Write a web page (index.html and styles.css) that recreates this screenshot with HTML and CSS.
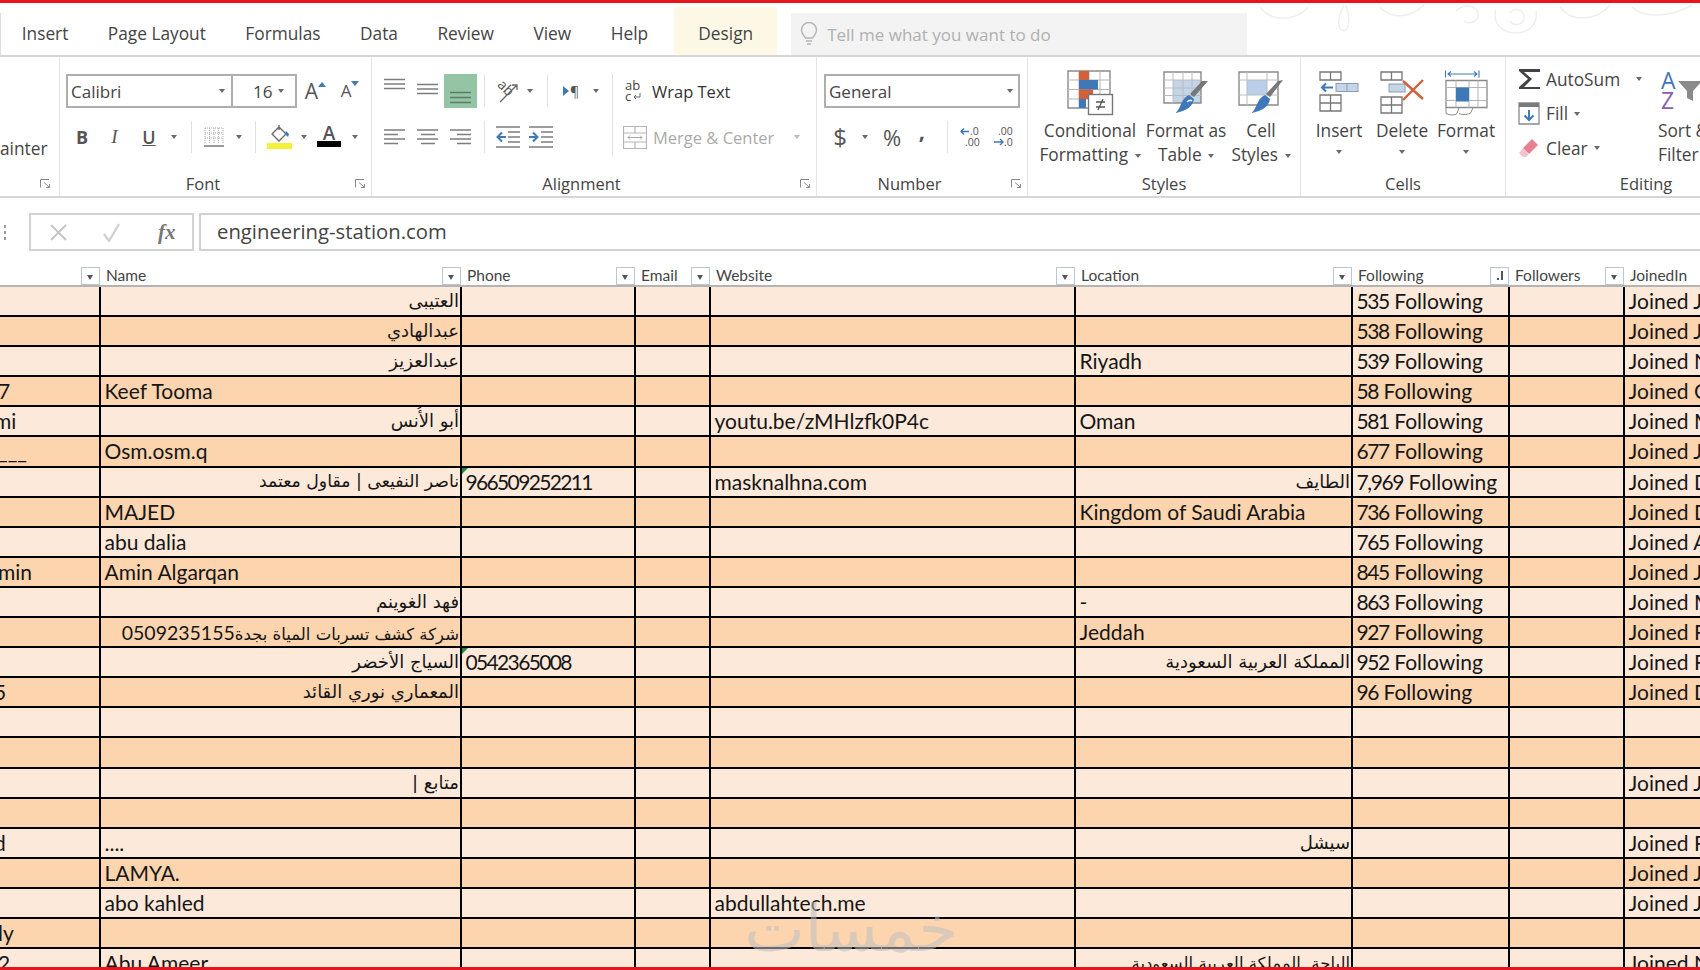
FILE: index.html
```html
<!DOCTYPE html>
<html lang="en">
<head>
<meta charset="utf-8">
<title>Excel sheet</title>
<link rel="stylesheet" href="styles.css">
</head>
<body>
<div class="frame">
  <nav class="tabs">
    <svg class="swirls" width="440" height="40" viewBox="0 0 440 40"><path d="M0 4c10 14 34 16 48 0M84 2c-6 12-8 24 0 26 6-2 6-14 2-26M120 4c10 12 30 12 44-2M196 8c8-8 20-6 22 2s-8 12-14 8M236 6c-4 14 6 24 20 24s22-10 20-22M250 10c4-6 14-4 14 4s-10 10-14 4M300 4c12 16 36 14 50-2M372 4c10 10 36 12 60-2"/></svg>
    <span class="tab">Insert</span>
    <span class="tab">Page Layout</span>
    <span class="tab">Formulas</span>
    <span class="tab">Data</span>
    <span class="tab">Review</span>
    <span class="tab">View</span>
    <span class="tab">Help</span>
    <span class="tab design">Design</span>
    <div class="tell">
      <svg width="18" height="24" viewBox="0 0 18 24"><path d="M5.500 16C3 13 1.500 11 1.500 8a7.500 7.500 0 0 1 15 0c0 3-1.500 5-4 8zM6 19h6M7 22h4" fill="none" stroke="#b5b5b5" stroke-width="1.400"/></svg>
      <span>Tell me what you want to do</span>
    </div>
  </nav>

  <section class="ribbon">
    <div class="group clip">
      <div class="clip-text">ainter</div>
      <div class="glabel"><span class="gname"></span><span class="launch"><svg width="11" height="9" viewBox="0 0 11 9"><path d="M.5 8.500V.5H9M4 3.500l5.500 5M9.500 5v3.500H6" fill="none" stroke="#888"/></svg></span></div>
    </div>

    <div class="group font">
      <div class="f-row1">
        <div class="combo name-combo"><span>Calibri</span><i class="car"></i></div>
        <div class="combo size-combo"><span>16</span><i class="car"></i></div>
        <div class="ibtn"><span class="big-a">A</span><svg width="8" height="5" class="tip" viewBox="0 0 8 5"><path d="M0 5L4 0l4 5z" fill="#4a78a8"/></svg></div>
        <div class="ibtn"><span class="small-a">A</span><svg width="8" height="5" class="tip" viewBox="0 0 8 5"><path d="M0 0l4 5 4-5z" fill="#4a78a8"/></svg></div>
      </div>
      <div class="f-row2">
        <b class="fb">B</b>
        <i class="fi">I</i>
        <u class="fu">U</u>
        <i class="car"></i>
        <i class="vsep"></i>
        <svg width="20" height="20" viewBox="0 0 20 20"><path d="M1 1h18M1 6h18M1 11h18M1 1v15M5.500 1v15M10 1v15M14.500 1v15M19 1v15" stroke="#aaa" stroke-dasharray="1 1" fill="none"/><path d="M0 19h20" stroke="#777" stroke-width="1.500"/></svg>
        <i class="car"></i>
        <i class="vsep"></i>
        <svg width="25" height="26" viewBox="0 0 25 26"><rect x="0" y="19" width="25" height="6" fill="#f4f03a"/><path d="M12 1v5M5 10l7-7 7 7-7 7z" fill="#fff" stroke="#666" stroke-width="1.300"/><path d="M19 7l3 3-1 3-3-3z" fill="#3f78b8"/></svg>
        <i class="car"></i>
        <svg width="24" height="22" viewBox="0 0 24 22"><text x="12" y="14" class="t-a">A</text><rect y="15" width="24" height="6" fill="#000"/></svg>
        <i class="car"></i>
      </div>
      <div class="glabel"><span class="gname">Font</span><span class="launch"><svg width="11" height="9" viewBox="0 0 11 9"><path d="M.5 8.500V.5H9M4 3.500l5.500 5M9.500 5v3.500H6" fill="none" stroke="#888"/></svg></span></div>
    </div>

    <div class="group align">
      <div class="a-body">
        <div class="a-left">
          <div class="a-row1">
            <svg width="33" height="34" viewBox="0 0 33 34"><path d="M6 5.500h21M6 10h21M6 14.500h21" class="ln"/></svg>
            <svg width="33" height="34" viewBox="0 0 33 34"><path d="M6 10.500h21M6 15h21M6 19.500h21" class="ln"/></svg>
            <svg class="on" width="33" height="34" viewBox="0 0 33 34"><path d="M6 18.500h21M6 23.500h21M6 28.500h21" class="ln dark"/></svg>
            <i class="vsep"></i>
            <svg width="26" height="24" viewBox="0 0 26 24"><g transform="rotate(45 8 10)"><text x="1" y="12" class="t-ab">ab</text></g><path d="M5 23L22 6M17 6h5v5" fill="none" stroke="#666" stroke-width="1.300"/></svg>
            <i class="car"></i>
            <i class="vsep"></i>
            <span class="rtl"><svg width="6" height="10" viewBox="0 0 6 10"><path d="M0 0l6 5-6 5z" fill="#3f78b8"/></svg>¶</span>
            <i class="car"></i>
          </div>
          <div class="a-row2">
            <svg width="33" height="18" viewBox="0 0 33 18"><path d="M6 2h21M6 6.500h14M6 11h21M6 15.500h14" class="ln"/></svg>
            <svg width="33" height="18" viewBox="0 0 33 18"><path d="M6 2h21M10 6.500h14M6 11h21M10 15.500h14" class="ln"/></svg>
            <svg width="33" height="18" viewBox="0 0 33 18"><path d="M6 2h21M13 6.500h14M6 11h21M13 15.500h14" class="ln"/></svg>
            <i class="vsep"></i>
            <svg width="26" height="22" viewBox="0 0 26 22"><path d="M1 1h24M13 6h12M13 11h12M13 16h12M1 21h24" class="ln"/><path d="M11 11H3M7 6.500L2.500 11 7 15.500" fill="none" stroke="#3f78b8" stroke-width="2"/></svg>
            <svg width="26" height="22" viewBox="0 0 26 22"><path d="M1 1h24M13 6h12M13 11h12M13 16h12M1 21h24" class="ln"/><path d="M1 11h8M5 6.500L9.500 11 5 15.500" fill="none" stroke="#3f78b8" stroke-width="2"/></svg>
          </div>
        </div>
        <i class="vsep tall"></i>
        <div class="a-right">
          <div class="wrap-row">
            <svg width="17" height="22" viewBox="0 0 17 22"><text x="0" y="10" class="t-wrap">ab</text><text x="0" y="21" class="t-wrap">c</text><path d="M15 13v4h-6M11 15l-2 2 2 2" fill="none" stroke="#666"/></svg>
            <span>Wrap Text</span>
          </div>
          <div class="merge-row">
            <svg width="24" height="23" viewBox="0 0 24 23"><path d="M.5.500h23v22H.5zM.5 7h23M.5 16h23M12 .5V7M12 16v6.500" fill="none" stroke="#b5b5b5" stroke-width="1.200"/><path d="M5 11.500h14M7 9.500l-2 2 2 2M17 9.500l2 2-2 2" fill="none" stroke="#aaa"/></svg>
            <span>Merge &amp; Center</span>
            <i class="car pale"></i>
          </div>
        </div>
      </div>
      <div class="glabel"><span class="gname">Alignment</span><span class="launch"><svg width="11" height="9" viewBox="0 0 11 9"><path d="M.5 8.500V.5H9M4 3.500l5.500 5M9.500 5v3.500H6" fill="none" stroke="#888"/></svg></span></div>
    </div>

    <div class="group number">
      <div class="combo general"><span>General</span><i class="car"></i></div>
      <div class="n-row2">
        <span class="n-sym dollar">$</span>
        <i class="car"></i>
        <span class="n-sym">%</span>
        <span class="n-sym comma">,</span>
        <i class="vsep"></i>
        <svg width="22" height="22" viewBox="0 0 22 22"><text x="10" y="9" class="t-dec">.0</text><text x="5" y="20" class="t-dec">.00</text><path d="M9 5.500H1M4 2.500l-3 3 3 3" fill="none" stroke="#3f78b8" stroke-width="1.400"/></svg>
        <i></i>
        <svg width="23" height="22" viewBox="0 0 23 22"><text x="6" y="9" class="t-dec">.00</text><text x="12" y="20" class="t-dec">.0</text><path d="M2 16h9M8 13l3 3-3 3" fill="none" stroke="#3f78b8" stroke-width="1.400"/></svg>
      </div>
      <div class="glabel"><span class="gname">Number</span><span class="launch"><svg width="11" height="9" viewBox="0 0 11 9"><path d="M.5 8.500V.5H9M4 3.500l5.500 5M9.500 5v3.500H6" fill="none" stroke="#888"/></svg></span></div>
    </div>

    <div class="group styles">
      <div class="bigs">
        <div class="big b-cond">
          <svg width="47" height="46" viewBox="0 0 47 46"><path d="M1 1h42v37H1z" fill="#fff" stroke="#8a8a8a" stroke-width="1.400"/><path d="M12 1v37M22 1v37M33 1v37M1 10h42M1 19.500h42M1 29h42" stroke="#b5b5b5"/><rect x="12" y="1" width="10" height="9" fill="#d2603a"/><rect x="12" y="10" width="19" height="9.500" fill="#3f78b8"/><rect x="12" y="19.500" width="14" height="9.500" fill="#d2603a"/><rect x="12" y="29" width="7" height="9" fill="#3f78b8"/><rect x="21.500" y="24.500" width="24" height="20" fill="#fff" stroke="#777" stroke-width="1.400"/><path d="M29 32h9M29 37h9M36 29l-5 11" fill="none" stroke="#555" stroke-width="1.300"/></svg>
          <span>Conditional</span>
          <span>Formatting <i class="car"></i></span>
        </div>
        <div class="big b-table">
          <svg width="46" height="44" viewBox="0 0 46 44"><rect x="10" y="9" width="28" height="23" fill="#c5d5e8"/><path d="M1 1h37v31H1z" fill="none" stroke="#8a8a8a" stroke-width="1.400"/><path d="M1 9h37M1 17h37M1 24.500h37M10 1v31M20 1v31M29 1v31" stroke="#b8bcc2"/><path d="M45 10L31 26l-4-3 12-13z" fill="#777"/><path d="M26 24l5 4c-1 7-7 12-19 14 6-3 5-14 14-18z" fill="#3f78b8"/><path d="M24 31c2-2 4-2 5-1" stroke="#fff" stroke-width="1.300" fill="none"/></svg>
          <span>Format as</span>
          <span>Table <i class="car"></i></span>
        </div>
        <div class="big b-cell">
          <svg width="46" height="44" viewBox="0 0 46 44"><rect x="9" y="9" width="20" height="15" fill="#b9cfe8"/><path d="M1 1h39v33H1z" fill="none" stroke="#8a8a8a" stroke-width="1.400"/><path d="M9 1v33M29 1v33M1 9h39M1 24h39" stroke="#b8bcc2"/><path d="M45 9L32 26l-4-3 12-13z" fill="#777"/><path d="M27 24l5 4c-1 7-7 12-19 14 6-3 5-14 14-18z" fill="#3f78b8"/></svg>
          <span>Cell</span>
          <span>Styles <i class="car"></i></span>
        </div>
      </div>
      <div class="glabel"><span class="gname">Styles</span></div>
    </div>

    <div class="group cells">
      <div class="bigs">
        <div class="big b-ins">
          <svg width="40" height="46" viewBox="0 0 40 46"><path d="M1 2h21v8H1zM11.500 2v8M1 25h21v16H1zM1 33h21M11.500 25v16" fill="none" stroke="#777" stroke-width="1.300"/><rect x="17" y="13.500" width="22" height="8" fill="#c5d5e8" stroke="#8a9db2"/><path d="M28 13.500v8" stroke="#8a9db2"/><path d="M14 17.500H3M7 13.500l-4 4 4 4" fill="none" stroke="#3f78b8" stroke-width="2"/></svg>
          <span>Insert</span>
          <i class="car lone"></i>
        </div>
        <div class="big b-del">
          <svg width="45" height="46" viewBox="0 0 45 46"><path d="M1 2h21v8H1zM11.500 2v8M1 27h21v16H1zM1 35h21M11.500 27v16" fill="none" stroke="#777" stroke-width="1.300"/><rect x="9" y="14" width="16" height="8" fill="#c5d5e8" stroke="#8a9db2"/><path d="M23 11l20 18M43 10L23 30" stroke="#d2603a" stroke-width="2.400"/></svg>
          <span>Delete</span>
          <i class="car lone"></i>
        </div>
        <div class="big b-fmt">
          <svg width="43" height="47" viewBox="0 0 43 47"><path d="M.5 1v7M34 1v7M3 4.500h29M6 2l-3 2.500L6 7M29 2l3 2.500L29 7" fill="none" stroke="#3f78b8" stroke-width="1.100"/><path d="M1 11h41v27H1z" fill="none" stroke="#8a8a8a" stroke-width="1.300"/><path d="M11 11v27M24 11v27M33 11v27M1 18h41M1 31h41" stroke="#b5b5b5"/><rect x="11" y="18" width="13" height="14" fill="#3f78b8"/><path d="M1 38v6c4 2 9 2 11 0l2-6M14 44c4 2 10 1 12-1l2-5" fill="none" stroke="#8a8a8a"/></svg>
          <span>Format</span>
          <i class="car lone"></i>
        </div>
      </div>
      <div class="glabel"><span class="gname">Cells</span></div>
    </div>

    <div class="group editing">
      <div class="e-body">
        <div class="e-list">
          <div class="e-row">
            <svg width="23" height="22" viewBox="0 0 23 22"><path d="M1 1h21v3H6l8 7-8 8h16v2H1v-2l9-8-9-8z" fill="#444"/></svg>
            <span>AutoSum</span>
            <i class="car far"></i>
          </div>
          <div class="e-row">
            <svg width="23" height="23" viewBox="0 0 23 23"><path d="M1 1h20v21H1z" fill="#fff" stroke="#8a8a8a" stroke-width="1.300"/><rect x="1" y="1" width="20" height="4" fill="#7a7a7a"/><path d="M11 8v10M6.500 13.500L11 18l4.500-4.500" fill="none" stroke="#3f78b8" stroke-width="2"/></svg>
            <span>Fill</span>
            <i class="car"></i>
          </div>
          <div class="e-row">
            <svg width="23" height="20" viewBox="0 0 23 20"><path d="M14 1l6 6-9 9-6-6z" fill="#e8808f"/><path d="M5 10l6 6-3 3H5l-4-4z" fill="#f2c3ca"/></svg>
            <span>Clear</span>
            <i class="car"></i>
          </div>
        </div>
        <div class="big b-sort">
          <div class="az"><span class="az-a">A</span><span class="az-z">Z</span><svg width="24" height="22" viewBox="0 0 24 22"><path d="M0 1h24L15 11v10l-6-3v-7z" fill="#8a8a8a"/></svg></div>
          <span>Sort &amp;</span>
          <span>Filter</span>
        </div>
      </div>
      <div class="glabel"><span class="gname">Editing</span></div>
    </div>
  </section>

  <section class="fbar">
    <div class="handle"><i></i><i></i><i></i></div>
    <div class="fx-box">
      <svg width="17" height="17" viewBox="0 0 17 17"><path d="M1 1l15 15M16 1L1 16" stroke="#c4c4c4" stroke-width="1.800"/></svg>
      <svg width="19" height="19" viewBox="0 0 19 19"><path d="M2 11l5 7L17 1" fill="none" stroke="#cfcfcf" stroke-width="2.200"/></svg>
      <span class="fx">fx</span>
    </div>
    <div class="f-input">engineering-station.com</div>
  </section>

  <div class="thead">
    <div class="th"><span></span><i class="fbtn"></i></div>
    <div class="th"><span>Name</span><i class="fbtn"></i></div>
    <div class="th"><span>Phone</span><i class="fbtn"></i></div>
    <div class="th"><span>Email</span><i class="fbtn"></i></div>
    <div class="th"><span>Website</span><i class="fbtn"></i></div>
    <div class="th"><span>Location</span><i class="fbtn"></i></div>
    <div class="th"><span>Following</span><i class="fbtn sorted"></i></div>
    <div class="th"><span>Followers</span><i class="fbtn"></i></div>
    <div class="th"><span>JoinedIn</span></div>
  </div>

  <main class="sheet">
    <div class="row"><div></div><div class="ar" dir="rtl">العتيبى</div><div></div><div></div><div></div><div></div><div><span class="d">535</span> Following</div><div></div><div>Joined June 2014</div></div>
    <div class="row"><div></div><div class="ar" dir="rtl">عبدالهادي</div><div></div><div></div><div></div><div></div><div><span class="d">538</span> Following</div><div></div><div>Joined July 2013</div></div>
    <div class="row"><div></div><div class="ar" dir="rtl">عبدالعزيز</div><div></div><div></div><div></div><div>Riyadh</div><div><span class="d">539</span> Following</div><div></div><div>Joined November 2012</div></div>
    <div class="row"><div class="cut">7</div><div>Keef Tooma</div><div></div><div></div><div></div><div></div><div><span class="d">58</span> Following</div><div></div><div>Joined October 2015</div></div>
    <div class="row"><div class="cut shift">mi</div><div class="ar" dir="rtl">أبو الأُنس</div><div></div><div></div><div>youtu.be/zMHlzfk0P4c</div><div>Oman</div><div><span class="d">581</span> Following</div><div></div><div>Joined March 2011</div></div>
    <div class="row"><div class="cut">___</div><div>Osm.osm.q</div><div></div><div></div><div></div><div></div><div><span class="d">677</span> Following</div><div></div><div>Joined June 2016</div></div>
    <div class="row"><div></div><div class="ar mid" dir="rtl">ناصر النفيعى | مقاول معتمد</div><div class="note ph">966509252211</div><div></div><div>masknalhna.com</div><div class="ar" dir="rtl">الطايف</div><div><span class="d">7,969</span> Following</div><div></div><div>Joined December 2014</div></div>
    <div class="row"><div></div><div>MAJED</div><div></div><div></div><div></div><div>Kingdom of Saudi Arabia</div><div><span class="d">736</span> Following</div><div></div><div>Joined December 2012</div></div>
    <div class="row"><div></div><div>abu dalia</div><div></div><div></div><div></div><div></div><div><span class="d">765</span> Following</div><div></div><div>Joined April 2015</div></div>
    <div class="row"><div class="cut">min</div><div>Amin Algarqan</div><div></div><div></div><div></div><div></div><div><span class="d">845</span> Following</div><div></div><div>Joined July 2012</div></div>
    <div class="row"><div></div><div class="ar" dir="rtl">فهد الغوينم</div><div></div><div></div><div></div><div>-</div><div><span class="d">863</span> Following</div><div></div><div>Joined May 2013</div></div>
    <div class="row"><div></div><div class="ar tight" dir="rtl">شركة كشف تسربات المياة بجدة<span class="num">0509235155</span></div><div></div><div></div><div></div><div>Jeddah</div><div><span class="d">927</span> Following</div><div></div><div>Joined February 2016</div></div>
    <div class="row"><div></div><div class="ar" dir="rtl">السياج الأخضر</div><div class="note ph">0542365008</div><div></div><div></div><div class="ar" dir="rtl">المملكة العربية السعودية</div><div><span class="d">952</span> Following</div><div></div><div>Joined February 2014</div></div>
    <div class="row"><div class="cut shift">5</div><div class="ar" dir="rtl">المعماري نوري القائد</div><div></div><div></div><div></div><div></div><div><span class="d">96</span> Following</div><div></div><div>Joined December 2013</div></div>
    <div class="row"><div></div><div></div><div></div><div></div><div></div><div></div><div></div><div></div><div></div></div>
    <div class="row"><div></div><div></div><div></div><div></div><div></div><div></div><div></div><div></div><div></div></div>
    <div class="row"><div></div><div class="ar" dir="rtl">متابع |</div><div></div><div></div><div></div><div></div><div></div><div></div><div>Joined July 2015</div></div>
    <div class="row"><div></div><div></div><div></div><div></div><div></div><div></div><div></div><div></div><div></div></div>
    <div class="row"><div class="cut shift">d</div><div>....</div><div></div><div></div><div></div><div class="ar" dir="rtl">سيشل</div><div></div><div></div><div>Joined February 2012</div></div>
    <div class="row"><div></div><div>LAMYA.</div><div></div><div></div><div></div><div></div><div></div><div></div><div>Joined June 2013</div></div>
    <div class="row"><div></div><div>abo kahled</div><div></div><div></div><div>abdullahtech.me</div><div></div><div></div><div></div><div>Joined July 2014</div></div>
    <div class="row"><div class="cut">ly</div><div></div><div></div><div></div><div></div><div></div><div></div><div></div><div></div></div>
    <div class="row"><div class="cut">2</div><div>Abu Ameer</div><div></div><div></div><div></div><div class="ar tight" dir="rtl">الباحة, المملكة العربية السعودية</div><div></div><div></div><div>Joined November 2012</div></div>
    <div class="wm" dir="rtl">خمسات</div>
  </main>
</div>
</body>
</html>
```

FILE: styles.css
```css
* { box-sizing: border-box; }
html, body { margin: 0; height: 100%; overflow: hidden; background: #fff; }
body { font-family: "Open Sans", "DejaVu Sans", sans-serif; color: #444; }
i { font-style: normal; }

.frame {
  width: 1700px; height: 970px; overflow: hidden;
  display: flex; flex-direction: column;
  border-top: 3px solid #e8141c; border-bottom: 3px solid #e8141c;
}

/* tabs */
.tabs {
  position: relative; flex: none; height: 54px;
  display: flex; align-items: stretch; padding-left: 2px;
  border-bottom: 2px solid #d6d6d6; font-size: 17.300px; color: #444;
}
.tabs::before { content: ""; position: absolute; left: 0; top: 10px; bottom: 0; width: 1px; background: #dcdcdc; }
.swirls { position: absolute; right: 0; top: 0; }
.swirls path { fill: none; stroke: #eeeeee; stroke-width: 1.500; }
.tab { display: flex; align-items: center; padding: 8px 19.750px 0; }
.design { margin: 4px 0 0 6.500px; padding: 4px 24px 0; background: #fdf8e6; }
.tell {
  display: flex; align-items: center; gap: 9px; margin: 10px 0 0 14px; width: 456px;
  padding-left: 9px; background: #f3f3f3; color: #b0b0b0; font-size: 17px;
}

/* ribbon */
.ribbon { flex: none; height: 141px; display: flex; border-bottom: 2px solid #d6d6d6; font-size: 17.300px; color: #444; }
.group { flex: none; display: flex; flex-direction: column; height: 139px; border-right: 1px solid #e4e4e4; }
.glabel { margin-top: auto; height: 25px; padding-bottom: 1px; flex: none; display: flex; align-items: center; font-size: 16.500px; }
.gname { flex: 1; text-align: center; }
.launch { width: 25px; flex: none; display: flex; padding-left: 9px; }
.car { flex: none; display: inline-block; width: 0; height: 0; border-style: solid; border-width: 4px 3.500px 0; border-color: #6a6a6a transparent transparent; vertical-align: middle; }
.car.pale { border-top-color: #bbb; }
.vsep { justify-self: center; display: block; width: 1px; height: 32px; background: #dfdfdf; }
.combo { display: flex; align-items: center; height: 34px; border: 2px solid #aeaeae; background: #fff; font-size: 17px; }

.clip { width: 60px; }
.clip-text { margin-top: 80px; padding-right: 17px; text-align: right; line-height: 24px; }
.clip .launch { padding-left: 0; width: 19px; }
.clip .glabel { justify-content: flex-end; }

.font { width: 312px; padding-top: 17px; }
.f-row1 { display: grid; grid-template-columns: 167px 64px 35px 34px; margin-left: 6px; height: 34px; align-items: center; }
.name-combo { justify-content: space-between; padding: 0 6px 0 3px; }
.size-combo { border-left: 0; padding: 0 5px 0 20px; gap: 6px; }
.ibtn { display: flex; justify-content: center; align-items: flex-start; padding-left: 2px; }
.big-a { font-size: 21px; line-height: 28px; color: #555; }
.small-a { font-size: 17px; line-height: 30px; color: #555; }
.tip { margin-top: 5px; }
.f-row2 {
  display: grid; grid-template-columns: 32px 33px 36px 14px 20px 25px 26px 6px 42px 7px 44px 7px;
  margin: 13px 0 0 6px; height: 30px; align-items: center; justify-items: center; color: #555;
}
.fb { font-size: 18px; }
.fi { font: italic 19px "Liberation Serif", serif; }
.fu { font-size: 18px; font-weight: 600; }
.t-a { font: 600 19px "Open Sans", sans-serif; fill: #555; text-anchor: middle; }

.align { width: 445px; padding-top: 17px; }
.a-body { display: flex; }
.a-left { width: 240px; }
.a-row1 { display: grid; grid-template-columns: 6px 33px 33px 33px 14px 33px 11px 24px 24px 26px; height: 34px; align-items: center; justify-items: center; }
.a-row1 svg:first-child { grid-column: 2; }
.a-row2 { display: grid; grid-template-columns: 6px 33px 33px 33px 14px 33px 33px; margin-top: 13px; height: 30px; align-items: center; justify-items: center; }
.a-row2 svg:first-child { grid-column: 2; }
.ln { fill: none; stroke: #7d7d7d; stroke-width: 1.500; }
.ln.dark { stroke: #5d7c68; }
.on { background: #93c5a5; }
.t-ab { font: 14px "Open Sans", sans-serif; fill: #555; }
.t-wrap { font: 13px "Open Sans", sans-serif; fill: #444; }
.rtl { display: flex; align-items: center; font-size: 14px; gap: 1px; color: #555; }
.vsep.tall { height: 82px; flex: none; margin-right: 8px; }
.a-right { flex: 1; }
.wrap-row { display: flex; align-items: center; gap: 10px; height: 34px; padding-left: 4px; font-size: 16.500px; color: #333; }
.merge-row { display: flex; align-items: center; gap: 6px; margin-top: 14px; height: 30px; padding-left: 2px; font-size: 16.500px; color: #aaa; }
.merge-row .car { margin-left: 14px; }

.number { width: 211px; padding-top: 17px; }
.general { width: 196px; margin-left: 7px; justify-content: space-between; padding: 0 5px 0 3px; }
.n-row2 { display: grid; grid-template-columns: 32px 18px 36px 24px 26px 21px 11px 23px; margin: 13px 0 0 7px; height: 30px; align-items: center; justify-items: center; color: #555; }
.n-sym { font-size: 22px; line-height: 30px; }
.dollar { font-size: 24px; }
.comma { font-weight: 700; line-height: 18px; align-self: start; }
.t-dec { font: 10.500px "Open Sans", sans-serif; fill: #555; }

.styles { width: 273px; padding-top: 12px; }
.cells { width: 205px; padding-top: 12px; }
.bigs { display: flex; }
.styles .bigs { padding-left: 10px; }
.cells .bigs { padding-left: 7px; }
.big { display: flex; flex-direction: column; align-items: center; flex: none; }
.big svg { margin-bottom: 2px; }
.big > span { line-height: 24px; white-space: nowrap; }
.big > span .car { margin-left: 2px; }
.big > svg { height: 48px; }
.b-cond { width: 104px; }
.b-table { width: 88px; }
.b-cell { width: 62px; }
.b-ins { width: 62px; }
.b-del, .b-fmt { width: 64px; }
.lone { margin-top: 7px; }

.editing { width: 280px; padding-top: 5px; border-right: 0; }
.e-body { display: flex; }
.e-list { width: 152px; padding-left: 12px; flex: none; }
.e-row { display: flex; align-items: center; height: 34.500px; }
.e-row svg { flex: none; margin-right: 5px; }
.e-row .car { margin-left: 6px; }
.e-row .car.far { margin-left: 16px; }
.b-sort { align-items: flex-start; padding-top: 8px; }
.az { position: relative; width: 44px; height: 49px; }
.az-a, .az-z { display: block; font-size: 23px; line-height: 20px; padding-left: 3px; }
.az-a { color: #3f78b8; }
.az-z { color: #8a5fb0; }
.az svg { position: absolute; left: 20px; top: 10px; margin: 0; }

/* formula bar */
.fbar { flex: none; height: 38px; margin-top: 15px; display: flex; padding-right: 0; }
.handle { width: 29px; display: flex; flex-direction: column; justify-content: center; gap: 3px; padding-left: 4px; }
.handle i { width: 2px; height: 3px; background: #999; }
.fx-box { width: 165px; display: flex; align-items: center; gap: 35px; padding-left: 19px; border: 2px solid #d2d2d2; }
.fx { font: italic 700 21px "Liberation Serif", serif; color: #777; margin-left: 2px; }
.f-input { flex: 1; margin-left: 5px; border: 2px solid #d2d2d2; border-right: 0; padding-left: 16px; font-size: 20.300px; line-height: 33px; color: #444; }

/* sheet */
.thead, .row { display: grid; grid-template-columns: 101px 361px 174px 75px 365px 277px 157px 115px 1fr; }
.thead { flex: none; height: 36px; border-bottom: 2px solid #b4b4b4; font: 15.500px "Lato", sans-serif; color: #444; }
.th { display: flex; justify-content: space-between; align-items: flex-end; padding-left: 5px; padding-right: 1px; overflow: hidden; }
.th span { line-height: 20px; white-space: nowrap; }
.fbtn { flex: none; position: relative; width: 19px; height: 18px; background: #fff; border: 1px solid #bcc6d2; }
.fbtn::after { content: ""; position: absolute; left: 5px; top: 7px; border-style: solid; border-width: 5px 3.500px 0; border-color: #555 transparent transparent; }
.fbtn.sorted::after { left: 10px; top: 3px; border-width: 0; width: 2px; height: 9px; background: #555; }
.fbtn.sorted::before { content: ""; position: absolute; left: 6px; top: 10px; width: 2px; height: 2px; background: #555; }
.sheet { position: relative; flex: 1; overflow: hidden; font: 21px "Lato", "DejaVu Sans", sans-serif; color: #161616; }
.row { height: 30.100px; }
.row:nth-child(odd) > div { background: #fde9da; }
.row:nth-child(even) > div { background: #fcd4ae; }
.row > div { position: relative; min-width: 0; overflow: hidden; white-space: nowrap; padding: 0 0 0 3.500px; line-height: 27px; border-right: 2px solid #000; border-bottom: 2px solid #000; }
.row > div:last-child { border-right: 0; }
.row > div.ar { padding: 3px 1px 0 0; font: 18px "DejaVu Sans", sans-serif; }
.row > div.mid { font-size: 17.300px; }
.row > div.tight { font-size: 16.500px; line-height: 24px; }
.row > div.cut { padding-left: 0; text-indent: -2px; }
.row > div.shift { text-indent: -6px; }
.d { letter-spacing: -1.400px; }
.ph { letter-spacing: -1.650px; }
.num { font: 19.500px "Lato", sans-serif; letter-spacing: -.6px; }
.note::before { content: ""; position: absolute; left: 0; top: 0; border-style: solid; border-width: 6px 6px 0 0; border-color: #1f8a3c transparent transparent; }
.wm { position: absolute; left: 751px; top: 605px; width: 207px; z-index: 2; text-align: center; font: 64px "DejaVu Sans", sans-serif; color: rgba(190, 190, 195, .55); white-space: nowrap; pointer-events: none; }
```
